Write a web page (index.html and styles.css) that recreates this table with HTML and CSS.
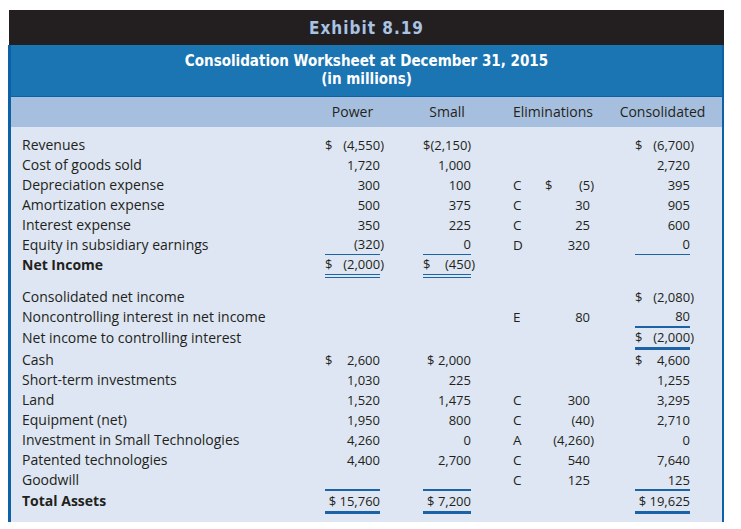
FILE: index.html
```html
<!DOCTYPE html>
<html>
<head>
<meta charset="utf-8">
<link rel="stylesheet" href="styles.css">
</head>
<body>
<div class="exhibit">
  <div class="exhibit-bar"><span>Exhibit 8.19</span></div>
  <div class="frame">
    <div class="title">
      <div>Consolidation Worksheet at December 31, 2015</div>
      <div>(in millions)</div>
    </div>
    <div class="row head">
      <div class="c-power">Power</div>
      <div class="c-small">Small</div>
      <div class="c-elim">Eliminations</div>
      <div class="c-cons">Consolidated</div>
    </div>
    <div class="body">
      <div class="row">
        <div class="lbl">Revenues</div>
        <div class="c-power num"><span>$</span><span class="neg">(4,550)</span></div>
        <div class="c-small num"><span>$(2,150)</span></div>
        <div class="c-cons num"><span>$</span><span class="neg">(6,700)</span></div>
      </div>
      <div class="row">
        <div class="lbl">Cost of goods sold</div>
        <div class="c-power num"><span>1,720</span></div>
        <div class="c-small num"><span>1,000</span></div>
        <div class="c-cons num"><span>2,720</span></div>
      </div>
      <div class="row">
        <div class="lbl">Depreciation expense</div>
        <div class="c-power num"><span>300</span></div>
        <div class="c-small num"><span>100</span></div>
        <div class="c-let">C</div>
        <div class="c-amt num"><span>$</span><span class="neg">(5)</span></div>
        <div class="c-cons num"><span>395</span></div>
      </div>
      <div class="row">
        <div class="lbl">Amortization expense</div>
        <div class="c-power num"><span>500</span></div>
        <div class="c-small num"><span>375</span></div>
        <div class="c-let">C</div>
        <div class="c-amt num"><span>30</span></div>
        <div class="c-cons num"><span>905</span></div>
      </div>
      <div class="row">
        <div class="lbl">Interest expense</div>
        <div class="c-power num"><span>350</span></div>
        <div class="c-small num"><span>225</span></div>
        <div class="c-let">C</div>
        <div class="c-amt num"><span>25</span></div>
        <div class="c-cons num"><span>600</span></div>
      </div>
      <div class="row">
        <div class="lbl">Equity in subsidiary earnings</div>
        <div class="c-power num u1"><span class="neg">(320)</span></div>
        <div class="c-small num u1"><span>0</span></div>
        <div class="c-let">D</div>
        <div class="c-amt num"><span>320</span></div>
        <div class="c-cons num u1"><span>0</span></div>
      </div>
      <div class="row">
        <div class="lbl bold">Net Income</div>
        <div class="c-power num dbl"><span>$</span><span class="neg">(2,000)</span></div>
        <div class="c-small num dbl"><span>$</span><span class="neg">(450)</span></div>
      </div>

      <div class="row gap-top">
        <div class="lbl">Consolidated net income</div>
        <div class="c-cons num"><span>$</span><span class="neg">(2,080)</span></div>
      </div>
      <div class="row h21">
        <div class="lbl">Noncontrolling interest in net income</div>
        <div class="c-let">E</div>
        <div class="c-amt num"><span>80</span></div>
        <div class="c-cons num u2"><span>80</span></div>
      </div>
      <div class="row h22">
        <div class="lbl">Net income to controlling interest</div>
        <div class="c-cons num u3"><span>$</span><span class="neg">(2,000)</span></div>
      </div>
      <div class="row">
        <div class="lbl">Cash</div>
        <div class="c-power num"><span>$</span><span>2,600</span></div>
        <div class="c-small num"><span>$ 2,000</span></div>
        <div class="c-cons num"><span>$</span><span>4,600</span></div>
      </div>
      <div class="row">
        <div class="lbl">Short-term investments</div>
        <div class="c-power num"><span>1,030</span></div>
        <div class="c-small num"><span>225</span></div>
        <div class="c-cons num"><span>1,255</span></div>
      </div>
      <div class="row">
        <div class="lbl">Land</div>
        <div class="c-power num"><span>1,520</span></div>
        <div class="c-small num"><span>1,475</span></div>
        <div class="c-let">C</div>
        <div class="c-amt num"><span>300</span></div>
        <div class="c-cons num"><span>3,295</span></div>
      </div>
      <div class="row">
        <div class="lbl">Equipment (net)</div>
        <div class="c-power num"><span>1,950</span></div>
        <div class="c-small num"><span>800</span></div>
        <div class="c-let">C</div>
        <div class="c-amt num"><span class="neg">(40)</span></div>
        <div class="c-cons num"><span>2,710</span></div>
      </div>
      <div class="row">
        <div class="lbl">Investment in Small Technologies</div>
        <div class="c-power num"><span>4,260</span></div>
        <div class="c-small num"><span>0</span></div>
        <div class="c-let">A</div>
        <div class="c-amt num"><span class="neg">(4,260)</span></div>
        <div class="c-cons num"><span>0</span></div>
      </div>
      <div class="row">
        <div class="lbl">Patented technologies</div>
        <div class="c-power num"><span>4,400</span></div>
        <div class="c-small num"><span>2,700</span></div>
        <div class="c-let">C</div>
        <div class="c-amt num"><span>540</span></div>
        <div class="c-cons num"><span>7,640</span></div>
      </div>
      <div class="row h19">
        <div class="lbl">Goodwill</div>
        <div class="c-let">C</div>
        <div class="c-amt num"><span>125</span></div>
        <div class="c-cons num"><span>125</span></div>
      </div>
      <div class="row total">
        <div class="lbl bold">Total Assets</div>
        <div class="c-power num tot"><span>$ 15,760</span></div>
        <div class="c-small num tot"><span>$ 7,200</span></div>
        <div class="c-cons num tot"><span>$ 19,625</span></div>
      </div>
    </div>
  </div>
</div>
</body>
</html>
```

FILE: styles.css
```css
html, body {
  margin: 0;
  padding: 0;
  background: #ffffff;
}

body {
  font-family: "Open Sans", Lato, "Liberation Sans", sans-serif;
  color: #231f20;
  font-size: 13px;
}

.exhibit {
  margin: 10px 0 0 8px;
  width: 716px;
}

.exhibit-bar {
  margin-left: 1px;
  height: 35px;
  background: #231f20;
  display: flex;
  align-items: center;
  justify-content: center;
}

.exhibit-bar span {
  font-family: "Liberation Sans Narrow", "DejaVu Sans Condensed", Lato, sans-serif;
  font-weight: bold;
  font-size: 17px;
  letter-spacing: 1px;
  color: #a9c3e3;
}

.frame {
  border-left: 3px solid #0d62a6;
  border-right: 2px solid #0d62a6;
}

.title {
  height: 52px;
  box-sizing: border-box;
  padding-top: 7px;
  background: #1b75b3;
  border-bottom: 1px solid #0d62a6;
  color: #ffffff;
  text-align: center;
  font-family: "Liberation Sans Narrow", "DejaVu Sans Condensed", Lato, sans-serif;
  font-weight: bold;
  font-size: 15px;
  line-height: 18px;
}

.row {
  display: grid;
  grid-template-columns: 314px 55px 43px 48px 42px 32px 45px 45px 55px 1fr;
  height: 20px;
  line-height: 20px;
  align-items: start;
}

.head {
  height: 30px;
  line-height: 30px;
  background: #a7bfde;
  font-size: 14px;
}

.head .c-power,
.head .c-small,
.head .c-cons {
  text-align: center;
  white-space: nowrap;
}

.head .c-power { margin: 0 -10px; }
.head .c-cons { margin: 0 -20px; }

.head .c-elim {
  grid-column: 6 / 9;
  white-space: nowrap;
}

.body {
  background: #dde6f2;
  padding: 8px 0 8px;
}

.lbl {
  grid-column: 1;
  padding-left: 11px;
  white-space: nowrap;
  font-size: 14px;
}

.bold { font-weight: bold; }

.c-power { grid-column: 2; }
.c-small { grid-column: 4; }
.c-let { grid-column: 6; font-size: 13.5px; }
.c-amt { grid-column: 7; }
.c-cons { grid-column: 9; }

.num {
  display: flex;
  justify-content: space-between;
  white-space: nowrap;
  font-variant-numeric: tabular-nums;
}

.num span:only-child {
  margin-left: auto;
}

.neg {
  margin-right: -4px;
}

.u1 {
  line-height: 19px;
  border-bottom: 1px solid #1b63a4;
}

.u2 {
  line-height: 19px;
  border-bottom: 2px solid #1b63a4;
}

.u3 {
  line-height: 19px;
  border-bottom: 3px solid #1b63a4;
}

.dbl {
  line-height: 19px;
  border-bottom: 4px double #1b63a4;
}

.gap-top { margin-top: 12px; }
.h21 { height: 21px; }
.h22 { height: 22px; }
.h19 { height: 19px; }

.total {
  height: 25px;
}

.total .lbl {
  padding-top: 2px;
}

.tot {
  border-top: 2px solid #1b63a4;
  border-bottom: 3px solid #1b63a4;
}
```
